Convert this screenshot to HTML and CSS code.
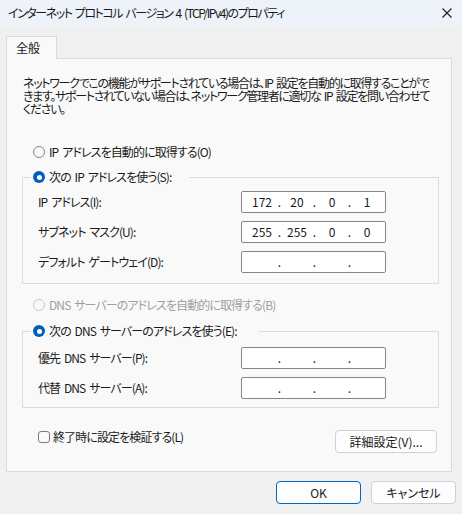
FILE: index.html
```html
<!DOCTYPE html>
<html lang="ja">
<head>
<meta charset="utf-8">
<title>インターネット プロトコル バージョン 4 (TCP/IPv4)のプロパティ</title>
<link rel="stylesheet" href="styles.css">
</head>
<body>
<div class="window">
  <div class="titlebar">
    <span class="title">インターネット プロトコル バージョン 4 (TCP/IPv4)のプロパティ</span>
    <svg class="close" width="10" height="10" viewBox="0 0 10 10"><path d="M0.5 0.5 L9.5 9.5 M9.5 0.5 L0.5 9.5" stroke="#1a1a1a" stroke-width="1.1" fill="none"/></svg>
  </div>
  <div class="content">
    <div class="tabs"><div class="tab">全般</div></div>
    <div class="panel">
      <p class="desc">ネットワークでこの機能がサポートされている場合は、IP 設定を自動的に取得することがで<br>きます。サポートされていない場合は、ネットワーク管理者に適切な IP 設定を問い合わせて<br>ください。</p>

      <div class="opt opt-ip"><span class="radio"></span><span>IP アドレスを自動的に取得する(O)</span></div>

      <fieldset class="group group-ip">
        <legend class="legend-ip"><span class="opt"><span class="radio on"></span><span>次の IP アドレスを使う(S):</span></span></legend>
        <div class="row"><span class="lbl">IP アドレス(I):</span>
          <div class="ip"><span class="seg">172</span><span class="dot">.</span><span class="seg">20</span><span class="dot">.</span><span class="seg">0</span><span class="dot">.</span><span class="seg">1</span></div></div>
        <div class="row"><span class="lbl">サブネット マスク(U):</span>
          <div class="ip"><span class="seg">255</span><span class="dot">.</span><span class="seg">255</span><span class="dot">.</span><span class="seg">0</span><span class="dot">.</span><span class="seg">0</span></div></div>
        <div class="row"><span class="lbl">デフォルト ゲートウェイ(D):</span>
          <div class="ip"><span class="seg"></span><span class="dot">.</span><span class="seg"></span><span class="dot">.</span><span class="seg"></span><span class="dot">.</span><span class="seg"></span></div></div>
      </fieldset>

      <div class="opt opt-dns disabled"><span class="radio"></span><span>DNS サーバーのアドレスを自動的に取得する(B)</span></div>

      <fieldset class="group group-dns">
        <legend class="legend-dns"><span class="opt"><span class="radio on"></span><span>次の DNS サーバーのアドレスを使う(E):</span></span></legend>
        <div class="row"><span class="lbl">優先 DNS サーバー(P):</span>
          <div class="ip"><span class="seg"></span><span class="dot">.</span><span class="seg"></span><span class="dot">.</span><span class="seg"></span><span class="dot">.</span><span class="seg"></span></div></div>
        <div class="row"><span class="lbl">代替 DNS サーバー(A):</span>
          <div class="ip"><span class="seg"></span><span class="dot">.</span><span class="seg"></span><span class="dot">.</span><span class="seg"></span><span class="dot">.</span><span class="seg"></span></div></div>
      </fieldset>

      <div class="bottom-row">
        <div class="check-row"><span class="checkbox"></span><span>終了時に設定を検証する(L)</span></div>
        <button class="btn btn-adv">詳細設定(V)...</button>
      </div>
    </div>
    <div class="footer">
      <button class="btn btn-default">OK</button>
      <button class="btn">キャンセル</button>
    </div>
  </div>
</div>
</body>
</html>
```

FILE: styles.css
```css
* { box-sizing: border-box; }
html, body { margin: 0; padding: 0; }
body {
  width: 462px;
  height: 514px;
  overflow: hidden;
  background: #f0f0f0;
  font-family: "Noto Sans CJK JP", sans-serif;
  font-size: 12px;
  line-height: 16px;
  color: #1a1a1a;
  font-feature-settings: "palt";
  letter-spacing: -0.9px;
  word-spacing: 2px;
}
.window {
  width: 462px;
  height: 514px;
  display: flex;
  flex-direction: column;
  background: #f0f0f0;
}
.titlebar {
  height: 28px;
  flex: none;
  background: #eef3f9;
  display: flex;
  align-items: center;
  justify-content: space-between;
  padding: 0 10px 2px 8px;
}
.title { white-space: nowrap; letter-spacing: -1.45px; }
.close { display: block; margin-top: -1px; }

.content { padding: 8px 8px 0 6px; }
.tabs { display: flex; }
.tab {
  width: 51px;
  height: 23px;
  border: 1px solid #d9d9d9;
  border-bottom: none;
  background: #f9f9f9;
  margin-bottom: -1px;
  padding: 2px 0 0 9px;
  line-height: 18px;
  letter-spacing: 0;
  position: relative;
  z-index: 1;
}
.panel {
  width: 446px;
  border: 1px solid #dcdcdc;
  background: #f9f9f9;
  padding: 17px 0 18px 0;
}
.desc {
  margin: 0 0 0 16px;
  line-height: 13px;
  white-space: nowrap;
  letter-spacing: -1.3px;
}
.opt {
  display: flex;
  align-items: center;
  height: 16px;
  white-space: nowrap;
}
.opt-ip { margin: 29px 0 0 26px; }
.opt-dns { margin: 13px 0 0 26px; }
.disabled { color: #a0a0a0; }
.radio {
  flex: none;
  width: 12px;
  height: 12px;
  border-radius: 50%;
  border: 1px solid #858585;
  background: #fbfbfb;
  margin-right: 4px;
  display: flex;
  align-items: center;
  justify-content: center;
}
.disabled .radio { border-color: #c8c8c8; background: #f9f9f9; }
.radio.on { border: none; background: #005fb8; }
.radio.on::after {
  content: "";
  width: 5px;
  height: 5px;
  border-radius: 50%;
  background: #fff;
}
.group {
  margin: 9px 12px 0 15px;
  border: 1px solid #dcdcdc;
  min-width: 0;
}
.group-ip { padding: 6px 0 10px 0; }
.group-dns { margin-top: 10px; padding: 8px 0 8px 0; }
legend {
  margin-left: 8px;
  padding: 0 2px;
  height: 16px;
}
.legend-ip { width: 158px; }
.legend-dns { width: 228px; }
.row {
  display: flex;
  align-items: center;
  height: 22px;
  padding-left: 15px;
}
.row + .row { margin-top: 8px; }
.lbl { width: 203px; white-space: nowrap; }
.ip {
  width: 145px;
  height: 22px;
  border: 1px solid #868686;
  border-radius: 2px;
  background: #fff;
  display: flex;
  align-items: center;
  padding-left: 6px;
  letter-spacing: 0;
}
.seg { width: 28px; text-align: center; }
.dot { width: 7px; text-align: center; }

.bottom-row {
  display: flex;
  justify-content: space-between;
  align-items: flex-start;
  margin: 22px 14px 0 31px;
}
.check-row {
  display: flex;
  align-items: center;
  height: 16px;
  margin-top: -1px;
}
.checkbox {
  width: 12px;
  height: 12px;
  border: 1px solid #7a7a7a;
  border-radius: 3px;
  background: #fbfbfb;
  margin-right: 3px;
}
.btn {
  font: inherit;
  color: #1a1a1a;
  height: 23px;
  width: 85px;
  padding: 0;
  background: #fdfdfd;
  border: 1px solid #d0d0d0;
  border-radius: 4px;
  line-height: 20px;
}
.btn-adv { width: 102px; }
.btn-default { border-color: #0067c0; }
.footer {
  display: flex;
  justify-content: flex-end;
  gap: 10px;
  margin-top: 9px;
  margin-right: -2px;
}
```
